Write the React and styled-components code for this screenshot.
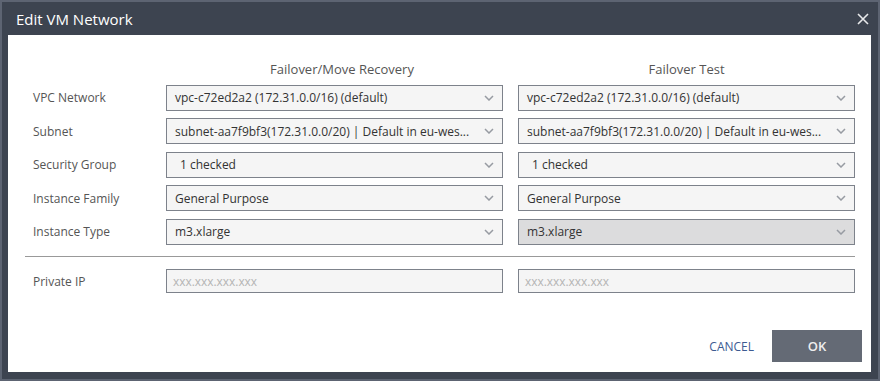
import React from 'react'
import styled, { createGlobalStyle } from 'styled-components'

const GlobalStyle = createGlobalStyle`
  html, body { margin: 0; padding: 0; background: #5d6472; }
  body { font-family: "Open Sans", "Noto Sans", sans-serif; }
  * { box-sizing: border-box; }
`

const Dialog = styled.div`
  margin: 2px;
  width: 876px;
  height: 377px;
  background: #3d4450;
  padding: 0 7px 7px 6px;
  display: flex;
  flex-direction: column;
`

const TitleBar = styled.div`
  height: 33px;
  display: flex;
  align-items: center;
  justify-content: space-between;
  padding: 0 2px 0 8px;
  color: #fff;
`

const Title = styled.h1`
  margin: 0;
  font-size: 15px;
  font-weight: 400;
`

const Close = styled.button`
  border: 0;
  background: none;
  padding: 0;
  width: 12px;
  height: 12px;
  display: flex;
  cursor: pointer;
`

const Panel = styled.div`
  flex: 1;
  background: #fff;
  display: flex;
  flex-direction: column;
  padding: 0 16px 0 17px;
`

const Grid = styled.div`
  display: grid;
  grid-template-columns: 126px 337px 337px;
  column-gap: 15px;
  row-gap: 7.5px;
  align-items: center;
  padding-top: ${p => p.top || 0}px;
`

const Heading = styled.div`
  font-size: 13px;
  line-height: 16px;
  height: 16px;
  color: #555;
  text-align: center;
  padding-left: ${p => p.shift || 0}px;
`

const Label = styled.div`
  font-size: 12px;
  color: #555;
  padding-left: 8px;
`

const Select = styled.div`
  height: 26px;
  border: 1px solid #7d828b;
  background: ${p => (p.$disabled ? '#dcdcdd' : '#f5f5f5')};
  display: flex;
  align-items: center;
  justify-content: space-between;
  padding: 0 8px 0 ${p => (p.$indent ? 13 : 8)}px;
  font-size: 12px;
  color: #333;
  white-space: nowrap;
`

const Chevron = () => (
  <svg width="10" height="6" viewBox="0 0 10 6">
    <path d="M1 1 L5 5 L9 1" fill="none" stroke="#979ba2" strokeWidth="1.5" />
  </svg>
)

const Divider = styled.hr`
  margin: 11.5px 0 12px;
  border: 0;
  border-top: 1px solid #999;
`

const Input = styled.div`
  height: 24px;
  border: 1px solid #7d828b;
  background: #f5f5f5;
  display: flex;
  align-items: center;
  padding-left: 6px;
  font-size: 11.9px;
  color: #b4b4b4;
`

const Footer = styled.div`
  margin-top: auto;
  display: flex;
  justify-content: flex-end;
  align-items: center;
  gap: 18px;
  padding: 0 0 10px;
  margin-right: -7px;
`

const Cancel = styled.button`
  border: 0;
  background: none;
  font-family: inherit;
  font-size: 12px;
  color: #3d5a91;
  padding: 0;
`

const Ok = styled.button`
  border: 0;
  background: #646a75;
  color: #eee;
  font-family: inherit;
  font-size: 13px;
  font-weight: 600;
  width: 90px;
  height: 32px;
`

const rows = [
  ['VPC Network', 'vpc-c72ed2a2 (172.31.0.0/16) (default)', 'vpc-c72ed2a2 (172.31.0.0/16) (default)'],
  ['Subnet', 'subnet-aa7f9bf3(172.31.0.0/20) | Default in eu-wes...', 'subnet-aa7f9bf3(172.31.0.0/20) | Default in eu-wes...'],
  ['Security Group', '1 checked', '1 checked', true],
  ['Instance Family', 'General Purpose', 'General Purpose'],
  ['Instance Type', 'm3.xlarge', 'm3.xlarge', false, true],
]

export default function App() {
  return (
    <>
      <GlobalStyle />
      <Dialog>
        <TitleBar>
          <Title>Edit VM Network</Title>
          <Close aria-label="close">
            <svg width="12" height="12" viewBox="0 0 12 12">
              <path d="M1 1 L11 11 M11 1 L1 11" stroke="#e8e9eb" strokeWidth="1.6" />
            </svg>
          </Close>
        </TitleBar>
        <Panel>
          <Grid top={26}>
            <div />
            <Heading shift={15}>Failover/Move Recovery</Heading>
            <Heading>Failover Test</Heading>
            {rows.map(([label, a, b, indent, disabled]) => (
              <React.Fragment key={label}>
                <Label>{label}</Label>
                <Select $indent={indent}>{a}<Chevron /></Select>
                <Select $indent={indent} $disabled={disabled}>{b}<Chevron /></Select>
              </React.Fragment>
            ))}
          </Grid>
          <Divider />
          <Grid>
            <Label>Private IP</Label>
            <Input>xxx.xxx.xxx.xxx</Input>
            <Input>xxx.xxx.xxx.xxx</Input>
          </Grid>
          <Footer>
            <Cancel>CANCEL</Cancel>
            <Ok>OK</Ok>
          </Footer>
        </Panel>
      </Dialog>
    </>
  )
}
